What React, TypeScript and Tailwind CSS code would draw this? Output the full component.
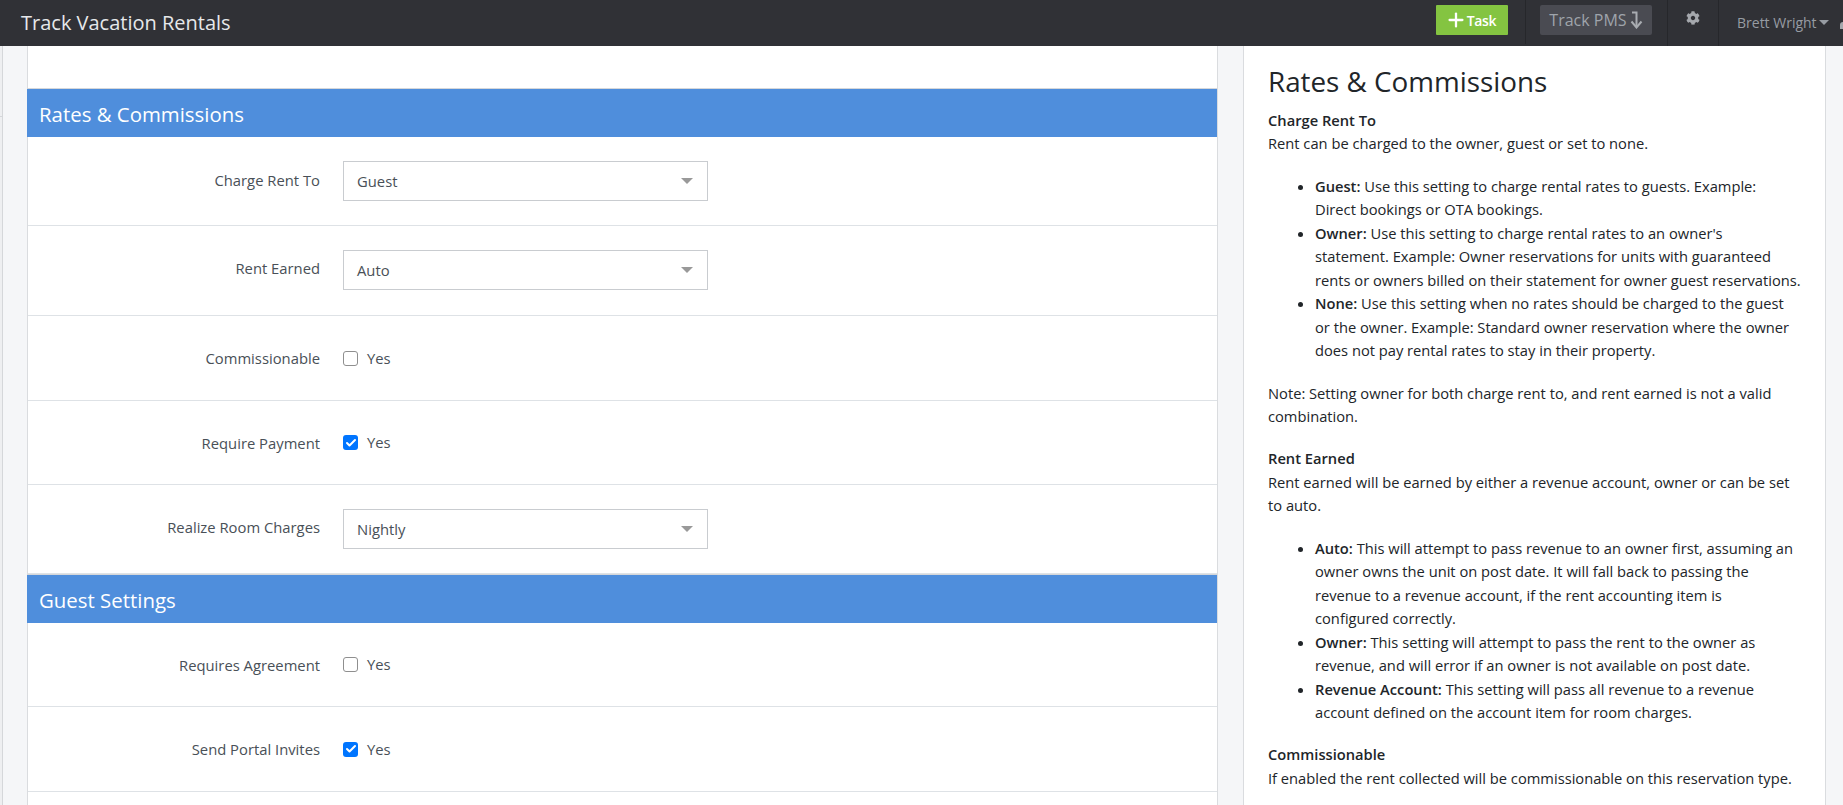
import type { ReactNode } from 'react';
import { Check, Plus } from 'lucide-react';
import { FaCog } from 'react-icons/fa';

function Field({ label, children, rowClass, labelClass }: { label: string; children: ReactNode; rowClass: string; labelClass: string }) {
  return (
    <div className={`flex items-center border-b border-[#dee2e6] ${rowClass}`}>
      <label className={`w-[292px] shrink-0 text-right text-[14.8px] text-[#495057] ${labelClass}`}>{label}</label>
      <div className="ml-[23px]">{children}</div>
    </div>
  );
}

function FakeSelect({ value }: { value: string }) {
  return (
    <div className="flex h-[40px] w-[365px] items-center justify-between border border-[#c9ccd0] bg-white pl-[13px] pr-[14px] text-[14.8px] text-[#495057]">
      <span className="pt-[1px]">{value}</span>
      <span className="h-0 w-0 border-x-[6px] border-t-[6px] border-x-transparent border-t-[#999999]" />
    </div>
  );
}

function Tick({ checked }: { checked?: boolean }) {
  return (
    <div className="flex items-center">
      {checked ? (
        <span className="flex h-[15px] w-[15px] items-center justify-center rounded-[3px] bg-[#0075ff]">
          <Check size={12} strokeWidth={4} className="text-white" />
        </span>
      ) : (
        <span className="h-[15px] w-[15px] rounded-[3px] border border-[#8f8f8f] bg-white" />
      )}
      <span className="ml-[9px] text-[14.8px] text-[#495057]">Yes</span>
    </div>
  );
}

function SectionBar({ title }: { title: string }) {
  return (
    <div className="-ml-[1px] flex h-[49px] items-center border-t border-[#d5d7da] bg-[#4f8edc] pl-[12px] pt-[3px] text-[20.4px] text-white">
      {title}
    </div>
  );
}

function TopBar() {
  return (
    <div className="flex h-[46px] items-center bg-[#303136]">
      <div className="ml-[21px] text-[20px] text-[#e6e8ea]">Track Vacation Rentals</div>
      <div className="ml-auto flex h-full items-center">
        <button className="mb-[6px] flex h-[30px] w-[72px] items-center justify-center rounded-[1px] bg-[#84c441] pr-[3px] text-[14px] font-semibold tracking-tight text-white">
          <Plus size={22} strokeWidth={2.5} />
          Task
        </button>
        <div className="ml-[17px] mb-[2px] h-[44px] self-start border-l border-[#26272b]" />
        <div className="mb-[6px] ml-[14px] flex h-[30px] w-[112px] items-center justify-center gap-[3px] rounded-[2px] bg-[#4a4b52] text-[16px] text-[#9fa4ab]">
          Track PMS
          <svg width="13" height="18" viewBox="0 0 13 18" fill="none" stroke="#a9acb1" strokeWidth="2">
            <path d="M2 1.5h4.5v14" />
            <path d="M1.5 10.5l5 6 5-6" />
          </svg>
        </div>
        <div className="ml-[15px] h-full border-l border-[#26272b]" />
        <div className="flex w-[50px] justify-center pb-[10px] text-[#a5a8ad]">
          <FaCog size={14} />
        </div>
        <div className="h-full border-l border-[#26272b]" />
        <div className="flex w-[124px] items-center overflow-hidden pb-[2px] pl-[18px] text-[14px] text-[#979ca3]">
          <span className="shrink-0">Brett Wright</span>
          <span className="ml-[2px] h-0 w-0 shrink-0 border-x-[5px] border-t-[5px] border-x-transparent border-t-[#979ca3]" />
          <span className="ml-auto mt-[6px] h-[7px] w-[3px] shrink-0 rounded-tl-full bg-[#a5a8ad]" />
        </div>
      </div>
    </div>
  );
}

function HelpPanel() {
  return (
    <div className="h-full whitespace-nowrap bg-white px-[24px] text-[14.7px] leading-[23.45px] text-[#212529]">
      <h3 className="pt-[16px] text-[27.8px] leading-[38px]">Rates &amp; Commissions</h3>
      <p className="mt-[9px] mb-[19px]">
        <b className="font-semibold">Charge Rent To</b>
        <br />
        Rent can be charged to the owner, guest or set to none.
      </p>
      <ul className="mb-[19px] list-disc pl-[47px]">
        <li>
          <b className="font-semibold">Guest:</b> Use this setting to charge rental rates to guests. Example:
          <br />
          Direct bookings or OTA bookings.
        </li>
        <li>
          <b className="font-semibold">Owner:</b> Use this setting to charge rental rates to an owner's
          <br />
          statement. Example: Owner reservations for units with guaranteed
          <br />
          rents or owners billed on their statement for owner guest reservations.
        </li>
        <li>
          <b className="font-semibold">None:</b> Use this setting when no rates should be charged to the guest
          <br />
          or the owner. Example: Standard owner reservation where the owner
          <br />
          does not pay rental rates to stay in their property.
        </li>
      </ul>
      <p className="mb-[19px]">
        Note: Setting owner for both charge rent to, and rent earned is not a valid
        <br />
        combination.
      </p>
      <p className="mb-[19px]">
        <b className="font-semibold">Rent Earned</b>
        <br />
        Rent earned will be earned by either a revenue account, owner or can be set
        <br />
        to auto.
      </p>
      <ul className="mb-[19px] list-disc pl-[47px]">
        <li>
          <b className="font-semibold">Auto:</b> This will attempt to pass revenue to an owner first, assuming an
          <br />
          owner owns the unit on post date. It will fall back to passing the
          <br />
          revenue to a revenue account, if the rent accounting item is
          <br />
          configured correctly.
        </li>
        <li>
          <b className="font-semibold">Owner:</b> This setting will attempt to pass the rent to the owner as
          <br />
          revenue, and will error if an owner is not available on post date.
        </li>
        <li>
          <b className="font-semibold">Revenue Account:</b> This setting will pass all revenue to a revenue
          <br />
          account defined on the account item for room charges.
        </li>
      </ul>
      <p>
        <b className="font-semibold">Commissionable</b>
        <br />
        If enabled the rent collected will be commissionable on this reservation type.
      </p>
    </div>
  );
}

export default function App() {
  return (
    <div className="h-[805px] w-[1843px] overflow-hidden bg-[#f5f6f8] font-['Open_Sans',sans-serif]">
      <TopBar />
      <div className="flex h-[759px]">
        <div className="flex w-[27px] shrink-0">
          <div className="h-full w-[2px] bg-[#eeeff1]">
            <div className="h-[71px] border-b border-[#d5d7da]" />
          </div>
          <div className="h-full w-[1px] bg-[#d5d7da]" />
        </div>
        <div className="w-[1191px] shrink-0 border-x border-[#dadcdf] bg-white">
          <div className="h-[42px]" />
          <SectionBar title="Rates & Commissions" />
          <Field label="Charge Rent To" rowClass="h-[89px]" labelClass="pb-[2px]">
            <FakeSelect value="Guest" />
          </Field>
          <Field label="Rent Earned" rowClass="h-[90px] pb-[1px]" labelClass="pb-[3px]">
            <FakeSelect value="Auto" />
          </Field>
          <Field label="Commissionable" rowClass="h-[85px]" labelClass="pt-[1px]">
            <Tick />
          </Field>
          <Field label="Require Payment" rowClass="h-[84px]" labelClass="pt-[1px]">
            <Tick checked />
          </Field>
          <Field label="Realize Room Charges" rowClass="h-[89px]" labelClass="pb-[4px]">
            <FakeSelect value="Nightly" />
          </Field>
          <SectionBar title="Guest Settings" />
          <Field label="Requires Agreement" rowClass="h-[84px]" labelClass="pt-[1px]">
            <Tick />
          </Field>
          <Field label="Send Portal Invites" rowClass="h-[85px]" labelClass="pt-[1px]">
            <Tick checked />
          </Field>
        </div>
        <div className="ml-[25px] w-[583px] shrink-0 border-x border-[#dadcdf] bg-white">
          <HelpPanel />
        </div>
      </div>
    </div>
  );
}
